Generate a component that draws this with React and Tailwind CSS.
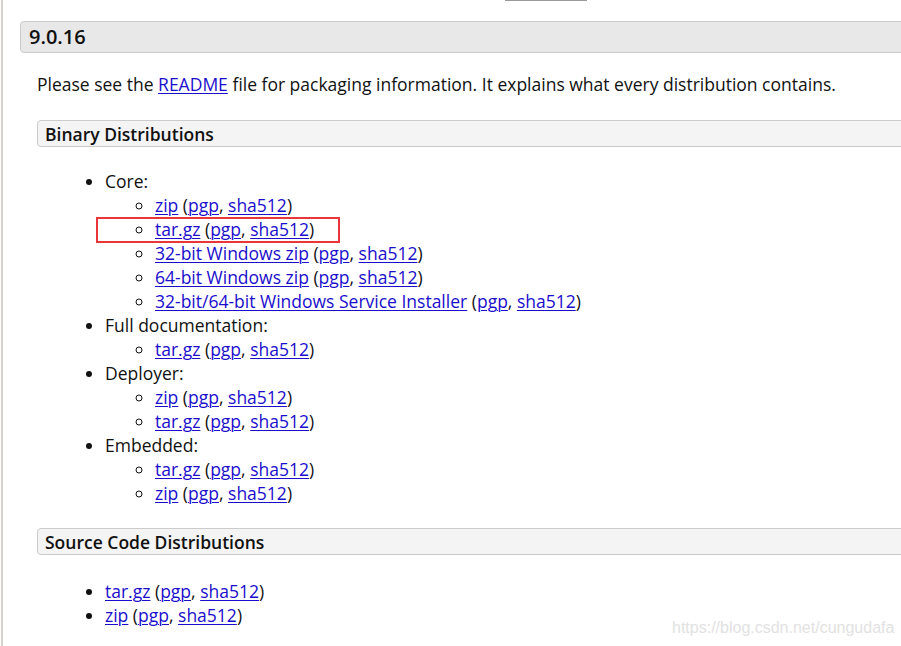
import React from 'react'

const link = 'text-[#1a0dcc] underline underline-offset-2 decoration-1'

function Files({ name, label }) {
  return (
    <>
      <a href="#" className={link}>{label || name}</a> (
      <a href="#" className={link}>pgp</a>,{' '}
      <a href="#" className={link}>sha512</a>)
    </>
  )
}

function Sub({ items }) {
  return (
    <ul className="list-[circle] pl-[50px]">
      {items.map((it, i) => (
        <li key={i} className={it.boxed ? 'relative' : ''}>
          {it.boxed && (
            <span className="absolute left-[-59px] top-[0px] w-[244px] h-[26px] border-2 border-[#e8363a]" />
          )}
          <Files label={it.label} />
        </li>
      ))}
    </ul>
  )
}

const binary = [
  {
    title: 'Core:',
    items: [
      { label: 'zip' },
      { label: 'tar.gz', boxed: true },
      { label: '32-bit Windows zip' },
      { label: '64-bit Windows zip' },
      { label: '32-bit/64-bit Windows Service Installer' },
    ],
  },
  { title: 'Full documentation:', items: [{ label: 'tar.gz' }] },
  { title: 'Deployer:', items: [{ label: 'zip' }, { label: 'tar.gz' }] },
  { title: 'Embedded:', items: [{ label: 'tar.gz' }, { label: 'zip' }] },
]

export default function App() {
  return (
    <div
      className="relative w-[901px] h-[646px] overflow-hidden bg-white text-[#111] text-[17.5px] leading-[24px]"
      style={{ fontFamily: '"Open Sans", "Noto Sans", sans-serif' }}
    >
      <div className="absolute left-[505px] top-0 w-[82px] h-px bg-[#999]" />
      <div className="h-full ml-[1px] border-l-[2px] border-[#d6d2cc] pl-[17px] pt-[21px]">
        <div className="w-[920px] h-[32px] bg-[#e8e8e8] border border-[#cbcbcb] rounded-l-[4px] pl-[8px] flex items-center text-[20px] font-semibold">
          9.0.16
        </div>
        <div className="pl-[17px]">
          <p className="mt-[19px]">
            Please see the <a href="#" className={link}>README</a> file for packaging information. It explains what every distribution contains.
          </p>
          <div className="mt-[24px] w-[900px] h-[27px] bg-[#f4f4f4] border border-[#cbcbcb] rounded-l-[4px] pl-[7px] flex items-center text-[17.5px] font-semibold">
            Binary Distributions
          </div>
          <ul className="list-disc pl-[68px] mt-[22px]">
            {binary.map(g => (
              <li key={g.title}>
                {g.title}
                <Sub items={g.items} />
              </li>
            ))}
          </ul>
          <div className="mt-[23px] w-[900px] h-[27px] bg-[#f4f4f4] border border-[#cbcbcb] rounded-l-[4px] pl-[7px] flex items-center text-[17.5px] font-semibold">
            Source Code Distributions
          </div>
          <ul className="list-disc pl-[68px] mt-[24px]">
            <li><Files label="tar.gz" /></li>
            <li><Files label="zip" /></li>
          </ul>
        </div>
      </div>
      <div
        className="absolute left-[672px] top-[617px] text-[16px] leading-[22px] text-[#e2e2e2]"
        style={{ fontFamily: '"Liberation Sans", Arial, sans-serif' }}
      >
        https://blog.csdn.net/cungudafa
      </div>
    </div>
  )
}
